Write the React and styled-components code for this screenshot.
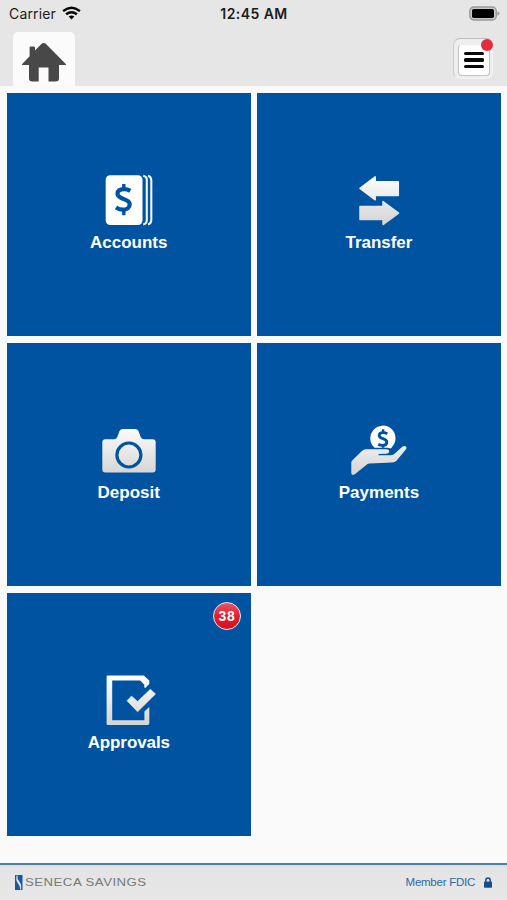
import React from "react";
import styled, { createGlobalStyle } from "styled-components";

const Global = createGlobalStyle`
  * { box-sizing: border-box; }
  body { margin: 0; background: #fafafa; font-family: "Liberation Sans", Arial, sans-serif; }
  svg { display: block; }
`;

const Screen = styled.div`
  width: 507px;
  height: 900px;
  display: flex;
  flex-direction: column;
  background: #fafafa;
  overflow: hidden;
`;

const Header = styled.header`
  height: 86px;
  flex: none;
  background: #e6e6e6;
`;

const StatusBar = styled.div`
  height: 28px;
  padding: 0 7px 2px 9px;
  display: grid;
  grid-template-columns: 1fr auto 1fr;
  align-items: center;
  font-family: Inter, sans-serif;
  color: #1b1b1b;
`;

const Carrier = styled.div`
  display: flex;
  align-items: center;
  gap: 6px;
  font-size: 14px;
  letter-spacing: 0.15px;
`;

const Clock = styled.div`
  font-size: 14px;
  font-weight: 600;
  letter-spacing: 0.45px;
  margin-right: 1px;
`;

const BatteryIcon = styled.svg`
  justify-self: end;
`;

const NavBar = styled.nav`
  height: 58px;
  padding: 4px 14px 0 13px;
  display: flex;
  justify-content: space-between;
`;

const HomeTab = styled.div`
  width: 62px;
  height: 54px;
  border-radius: 5px 5px 0 0;
  background: #fbfbfb;
  padding: 10px 0 0 8px;
`;

const MenuButton = styled.div`
  position: relative;
  width: 40px;
  height: 41px;
  margin-top: 6px;
  padding: 5px 4px;
  border-radius: 7px;
  background: #eeeeee;
  border: 1px solid #f4f4f4;
  border-top-color: #bdbdbd;
  border-left-color: #cdcdcd;
`;

const MenuFace = styled.div`
  width: 32px;
  height: 32px;
  border: 1px solid #c4c4c4;
  border-top-color: #ededed;
  border-radius: 4px;
  background: #fdfdfd;
  display: flex;
  flex-direction: column;
  align-items: center;
  justify-content: center;
  gap: 3px;
`;

const MenuLine = styled.span`
  width: 20px;
  height: 3.5px;
  border-radius: 1.5px;
  background: #080808;
`;

const Dot = styled.span`
  position: absolute;
  top: 0;
  right: -1px;
  width: 12px;
  height: 12px;
  border-radius: 50%;
  background: #e62b3c;
`;

const Tiles = styled.main`
  flex: 1;
  padding: 7px 6px 0 7px;
  display: grid;
  grid-template-columns: 243.5px 243.5px;
  grid-auto-rows: 243px;
  column-gap: 6.7px;
  row-gap: 6.8px;
  align-content: start;
`;

const Tile = styled.div`
  position: relative;
  background: #0053a0;
  padding-top: 80px;
  display: flex;
  flex-direction: column;
  align-items: center;
`;

const TileLabel = styled.div`
  margin-top: 4px;
  font-size: 17px;
  line-height: 20px;
  font-weight: 700;
  color: #fff;
  letter-spacing: ${(p) => p.$track || 0}px;
`;

const Badge = styled.div`
  position: absolute;
  top: 9px;
  right: 10px;
  width: 28px;
  height: 28px;
  border-radius: 50%;
  border: 1.5px solid #e6eaf6;
  background: linear-gradient(#ee5361, #e01f31 50%, #d90f20);
  color: #fff;
  font-size: 14px;
  font-weight: 700;
  letter-spacing: 0.8px;
  padding-left: 1px;
  display: flex;
  align-items: center;
  justify-content: center;
`;

const Footer = styled.footer`
  height: 37px;
  flex: none;
  padding: 0 15px 1px 15px;
  border-top: 2px solid #4b80a9;
  background: linear-gradient(#d8dde1, #e4e4e4 3px, #e7e7e7);
  display: flex;
  align-items: center;
  justify-content: space-between;
`;

const Brand = styled.div`
  display: flex;
  align-items: center;
  gap: 2px;
`;

const BrandName = styled.span`
  font-size: 11px;
  line-height: 14px;
  color: #787878;
  letter-spacing: 0.4px;
  white-space: nowrap;
  transform: scaleX(1.2);
  transform-origin: left;
`;

const Member = styled.div`
  display: flex;
  align-items: center;
  gap: 9px;
  font-size: 11.5px;
  letter-spacing: -0.25px;
  color: #2e68ac;
`;

const IconSvg = styled.svg.attrs({ width: 61, height: 56, viewBox: "0 0 61 56" })``;

const Silver = ({ id }) => (
  <defs>
    <linearGradient id={id} gradientUnits="userSpaceOnUse" x1="0" y1="2" x2="0" y2="52">
      <stop offset="0" stopColor="#ffffff" />
      <stop offset="1" stopColor="#d4d4d4" />
    </linearGradient>
  </defs>
);

const AccountsIcon = () => (
  <IconSvg>
    <rect x="7.7" y="2.3" width="36.8" height="49.7" rx="4.5" fill="#fff" />
    <g fill="none" stroke="#f2f5fb" strokeWidth="2.1">
      <path d="M45.2 2.8Q48.8 3.6 48.8 7V47Q48.8 50.7 45.2 51.5" />
      <path d="M50 2.8Q53.3 3.8 53.3 7.5V46.5Q53.3 50.5 50 51.5" />
    </g>
    <g fill="none" stroke="#0053a0">
      <path strokeWidth="4.2" d="M32.3 17.9Q29.4 16.1 26 16.1C21.2 16.1 19.5 18.2 19.5 20.8C19.5 27.1 31.7 24.7 31.7 31.2C31.7 34.6 29.1 36.7 25.1 36.7Q21.3 36.7 18 34.5" />
      <path strokeWidth="3.4" d="M25.8 11V17M25.8 36V42.2" />
    </g>
  </IconSvg>
);

const TransferIcon = () => (
  <IconSvg>
    <Silver id="transfer" />
    <g fill="url(#transfer)" stroke="url(#transfer)" strokeWidth="1.5" strokeLinejoin="round">
      <path d="M12 15.3L27.2 3.9V8.8H50.3V22.4H27.2V26.8Z" />
      <path d="M50.6 40.1L35 28.6V33.4H12V46.4H35V51.6Z" />
    </g>
  </IconSvg>
);

const DepositIcon = () => (
  <IconSvg>
    <Silver id="deposit" />
    <path fill="url(#deposit)" d="M7.3 16.3H16Q18.3 16.3 19.2 14.2L21.4 8.3Q22.4 6 24.8 6H37.2Q39.6 6 40.6 8.3L42.8 14.2Q43.7 16.3 46 16.3H54.7Q57.7 16.3 57.7 19.3V46.6Q57.7 49.6 54.7 49.6H7.3Q4.3 49.6 4.3 46.6V19.3Q4.3 16.3 7.3 16.3Z" />
    <circle cx="30.9" cy="32" r="12" fill="none" stroke="#0053a0" strokeWidth="3.2" />
  </IconSvg>
);

const PaymentsIcon = () => (
  <IconSvg>
    <Silver id="payments" />
    <path fill="#fff" d="M26.7 24.8A12.6 12.6 0 1 1 44.2 23.7Q43.4 25.2 42.4 25.6Q41.2 24.8 39.5 24.8Z" />
    <g fill="none" stroke="#0053a0">
      <path strokeWidth="2.9" d="M39.3 10.7Q37.4 9.6 35.2 9.6C32.4 9.6 31.2 10.9 31.2 12.5C31.2 16.4 38.8 15 38.8 19C38.8 21.2 37.1 22.4 34.7 22.4Q32.2 22.4 30.2 21.2" />
      <path strokeWidth="2.5" d="M35.1 6.2V10M35.1 22V24.8" />
    </g>
    <path fill="url(#payments)" d="M3.3 50V39.4Q3.3 38.4 4.2 37.5L13.6 28.2Q15.5 26.3 18 26.3H38.6Q41.2 26.3 41.2 28.6Q41.2 30.7 38.6 30.7L30.5 31.1V32.3H42.7Q44.6 32.3 46.2 30.9L54.3 23.8Q56.4 22.2 58 23.4Q59.3 24.6 57.8 26.6L48.5 37.7Q46.8 39.5 44.3 39.5L21.5 40.4Q20 40.5 18.9 41.4L7.5 50.8Q5.9 52.2 4.5 51.8Q3.3 51.4 3.3 50Z" />
  </IconSvg>
);

const ApprovalsIcon = () => (
  <IconSvg>
    <Silver id="approvals" />
    <path fill="url(#approvals)" d="M9.7 2.6H45.8L51.3 7.6V11L47.5 14.7H46.3V11.8L42.2 7.5H14.2V47.2H46.4V38.4L51.3 34V50.3Q51.3 52 49.6 52H9.7Q8.6 52 8.6 50.9V3.7Q8.6 2.6 9.7 2.6Z" />
    <path fill="url(#approvals)" d="M29 27.8L33.5 23.1L39.6 28.4L52.3 16.3L57.5 21L39.6 38.8Z" stroke="url(#approvals)" strokeWidth="0.6" strokeLinejoin="round" />
  </IconSvg>
);

const WifiIcon = () => (
  <svg width="19" height="14" viewBox="0 0 19 14" fill="none" stroke="#050505" strokeWidth="2.5">
    <path d="M1.1 5.1Q9.5 -1.7 17.9 5.1" />
    <path d="M4.1 8.3Q9.5 4.1 14.9 8.3" />
    <path d="M6.7 10.5Q9.5 8.6 12.3 10.5L9.5 13.4Z" fill="#050505" stroke="none" />
  </svg>
);

const tiles = [
  { label: "Accounts", icon: AccountsIcon },
  { label: "Transfer", icon: TransferIcon, track: -0.05 },
  { label: "Deposit", icon: DepositIcon },
  { label: "Payments", icon: PaymentsIcon },
  { label: "Approvals", icon: ApprovalsIcon, track: -0.1, badge: 38 },
];

export default function App() {
  return (
    <Screen>
      <Global />
      <Header>
        <StatusBar>
          <Carrier>Carrier <WifiIcon /></Carrier>
          <Clock>12:45 AM</Clock>
          <BatteryIcon width="31" height="15" viewBox="0 0 31 15">
            <rect x="0.8" y="1" width="26.5" height="13" rx="4" fill="#c8c8c8" stroke="#999" strokeWidth="1.3" />
            <rect x="3" y="3" width="22" height="9" rx="1.8" fill="#000" />
            <path d="M28.4 5L30.8 7.5L28.4 10Z" fill="#999" />
          </BatteryIcon>
        </StatusBar>
        <NavBar>
          <HomeTab>
            <svg width="46" height="40" viewBox="0 0 46 40">
              <path fill="#484848" d="M1.2 22Q.3 22.9 1.6 22.9H8V36.3Q8 39.5 11.2 39.5H17.7V25.5H27.5V39.5H34.8Q38 39.5 38 36.3V22.9H44.4Q45.7 22.9 44.8 22L25 2.1Q22.7 -.1 20.4 2.1L14 8.5V5.7Q14 4.5 12.8 4.5H9.8Q8.6 4.5 8.6 5.7V14.2Z" />
            </svg>
          </HomeTab>
          <MenuButton>
            <MenuFace><MenuLine /><MenuLine /><MenuLine /></MenuFace>
            <Dot />
          </MenuButton>
        </NavBar>
      </Header>
      <Tiles>
        {tiles.map(({ label, icon: Icon, badge, track }) => (
          <Tile key={label}>
            <Icon />
            <TileLabel $track={track}>{label}</TileLabel>
            {badge && <Badge>{badge}</Badge>}
          </Tile>
        ))}
      </Tiles>
      <Footer>
        <Brand>
          <svg width="8" height="15" viewBox="0 0 8 15">
            <rect width="7.5" height="15" fill="#1758a0" />
            <path d="M2 0.5Q1.5 4 4 6.5Q6.7 9.5 5.7 14.5Q5 10 3.2 8.3Q.8 5.5 2 .5Z" fill="#fff" stroke="#dce7f2" strokeWidth=".6" />
          </svg>
          <BrandName>SENECA SAVINGS</BrandName>
        </Brand>
        <Member>
          Member FDIC
          <svg width="8" height="11" viewBox="0 0 8 11">
            <path d="M1.8 5V3.2Q1.8 .9 4 .9Q6.2 .9 6.2 3.2V5" fill="none" stroke="#164d91" strokeWidth="1.5" />
            <rect y="4.5" width="8" height="6.2" rx=".8" fill="#164d91" />
          </svg>
        </Member>
      </Footer>
    </Screen>
  );
}
